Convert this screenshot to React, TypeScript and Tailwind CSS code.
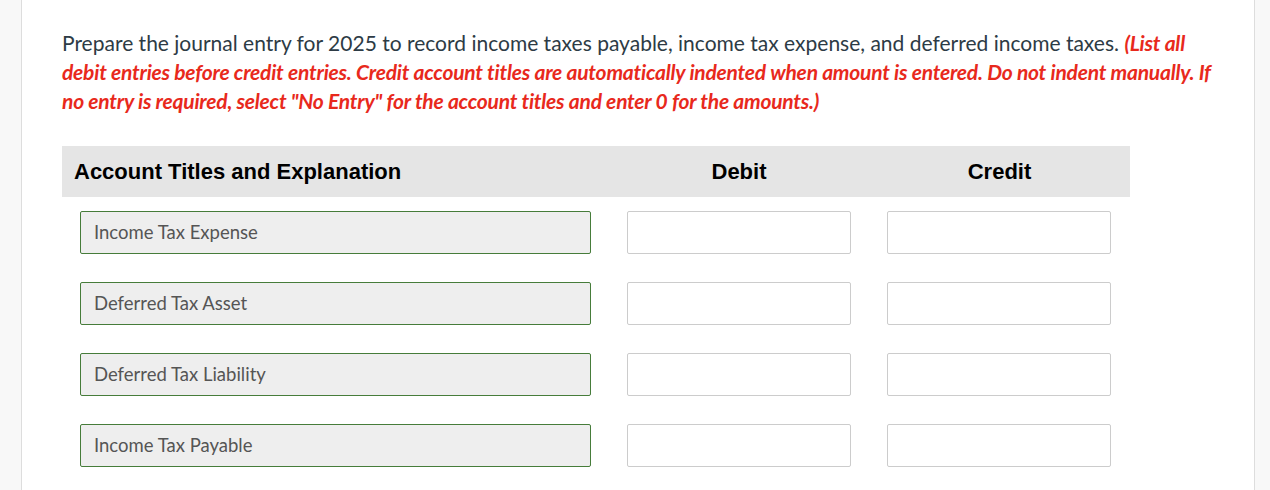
import React from "react";

const rows = ["Income Tax Expense", "Deferred Tax Asset", "Deferred Tax Liability", "Income Tax Payable"];

export default function App() {
  return (
    <div className="flex w-[1270px] h-[490px] overflow-hidden bg-white" style={{ fontFamily: "Lato, 'Noto Sans', sans-serif" }}>
      <div className="w-[22px] shrink-0 bg-[#f8f8f8] border-r border-[#dddddd]" />
      <div className="w-[1232px] shrink-0 pl-[40px] pt-[28px]">
        <p className="w-[1160px] text-[21px] leading-[29px] text-[#2d3b45]">
          Prepare the journal entry for 2025 to record income taxes payable, income tax expense, and deferred income taxes.{" "}
          <span className="font-bold italic text-[#e8291c] tracking-[-0.22px]">
            (List all debit entries before credit entries. Credit account titles are automatically indented when amount is entered. Do not indent manually. If no entry is required, select "No Entry" for the account titles and enter 0 for the amounts.)
          </span>
        </p>
        <div className="mt-[31px] w-[1068px]">
          <div className="grid grid-cols-[547px_260px_261px] h-[51px] items-center bg-[#e5e5e5] text-[22px] font-bold text-black" style={{ fontFamily: "'Liberation Sans', Arial, sans-serif" }}>
            <div className="pl-[12px]">Account Titles and Explanation</div>
            <div className="text-center">Debit</div>
            <div className="text-center">Credit</div>
          </div>
          {rows.map((r) => (
            <div key={r} className="grid grid-cols-[547px_260px_261px] py-[14px]">
              <div className="px-[18px]">
                <div className="h-[43px] rounded-[2px] border border-[#467c3a] bg-[#eeeeee] flex items-center pl-[13px] text-[18.5px] text-[#555555]">
                  {r}
                </div>
              </div>
              <div className="px-[18px]">
                <div className="h-[43px] rounded-[2px] border border-[#cccccc] bg-white" />
              </div>
              <div className="pl-[18px] pr-[19px]">
                <div className="h-[43px] rounded-[2px] border border-[#cccccc] bg-white" />
              </div>
            </div>
          ))}
        </div>
      </div>
      <div className="flex-1 bg-[#f8f8f8] border-l border-[#dddddd]" />
    </div>
  );
}
